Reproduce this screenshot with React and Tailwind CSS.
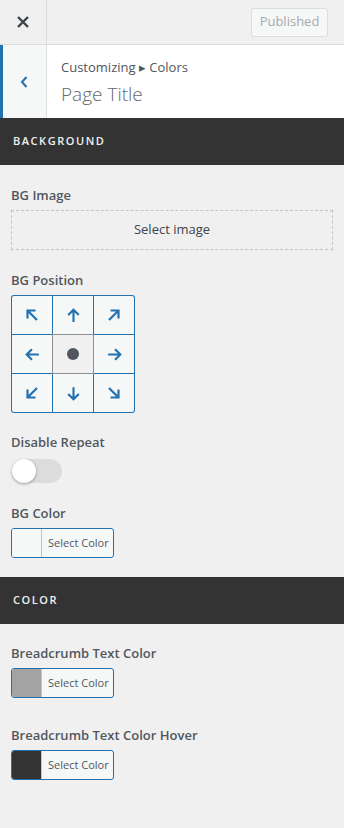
import React from 'react';

const font = { fontFamily: '"Open Sans", "Noto Sans", sans-serif' };

const Arrow = ({ rotate }) => (
    <svg width="17" height="17" viewBox="0 0 16 16" style={{ transform: `rotate(${rotate}deg)` }}>
        <path d="M8 14V3M3 7.5L8 2.5L13 7.5" fill="none" stroke="#2271b1" strokeWidth="2" />
    </svg>
);

const DiagArrow = ({ rotate }) => (
    <svg width="16" height="16" viewBox="0 0 16 16" style={{ transform: `rotate(${rotate}deg)` }}>
        <path d="M13 13L4 4M3.5 11.5V3.5H11.5" fill="none" stroke="#2271b1" strokeWidth="2.2" />
    </svg>
);

const cells = [
    { kind: 'diag', r: 0 },
    { kind: 'arrow', r: 0 },
    { kind: 'diag', r: 90 },
    { kind: 'arrow', r: -90 },
    { kind: 'center' },
    { kind: 'arrow', r: 90 },
    { kind: 'diag', r: -90 },
    { kind: 'arrow', r: 180 },
    { kind: 'diag', r: 180 },
];

const Label = ({ children }) => (
    <div className="text-[13px] font-semibold text-[#50575e] leading-5 mb-[5px]">{children}</div>
);

const ColorButton = ({ swatch }) => (
    <div className="flex w-[103px] h-[30px] border border-[#2271b1] rounded-[3px] overflow-hidden bg-[#f6f7f7]">
        <div className={`w-[30px] border-r border-[#c3c4c7] ${swatch}`}></div>
        <div className="flex-1 flex items-center pl-[6px] text-[11px] text-[#50575e]">Select Color</div>
    </div>
);

const SectionHeader = ({ children }) => (
    <div className="h-[47px] bg-[#333333] flex items-center px-[13px] text-[11px] font-semibold tracking-[0.14em] text-[#f0f0f1]">
        {children}
    </div>
);

export default function App() {
    return (
        <div className="w-[344px] h-[828px] bg-[#f0f0f1] overflow-hidden" style={font}>
            {/* top bar */}
            <div className="flex h-[45px] border-b border-[#dcdcde] bg-[#f0f0f1]">
                <div className="w-[47px] border-r border-[#dcdcde] flex items-center justify-center">
                    <svg width="16" height="16" viewBox="0 0 16 16">
                        <path d="M3 3L13 13M13 3L3 13" stroke="#3c434a" strokeWidth="2.4" />
                    </svg>
                </div>
                <div className="flex-1 flex items-center justify-end pr-[16px]">
                    <div className="w-[77px] h-[29px] border border-[#dcdcde] rounded-[3px] bg-[#f6f7f7] flex items-center justify-center text-[13px] text-[#a7aaad]">
                        Published
                    </div>
                </div>
            </div>

            {/* title */}
            <div className="flex h-[73px] bg-white">
                <div className="w-[47px] bg-[#f6f7f7] border-l-[3px] border-[#2271b1] border-r border-r-[#dcdcde] flex items-center justify-center pr-[2px]">
                    <svg width="10" height="14" viewBox="0 0 10 14">
                        <path d="M7.5 2L3 7L7.5 12" fill="none" stroke="#2271b1" strokeWidth="2" />
                    </svg>
                </div>
                <div className="flex-1 pl-[14px] pt-[13px]">
                    <div className="text-[13px] text-[#50575e] leading-[19px]">Customizing &#9656; Colors</div>
                    <div className="text-[19px] text-[#646970] leading-[28px] font-light mt-[3px]">Page Title</div>
                </div>
            </div>

            <SectionHeader>BACKGROUND</SectionHeader>

            <div className="px-[11px] pt-[20px] pb-[19px]">
                <Label>BG Image</Label>
                <div className="h-[40px] border border-dashed border-[#c3c4c7] flex items-center justify-center text-[13px] text-[#3c434a] mb-[20px]">
                    Select image
                </div>

                <Label>BG Position</Label>
                <div className="grid grid-cols-3 gap-px p-px w-[124px] bg-[#2271b1] rounded-[3px] mb-[19px]">
                    {cells.map((c, i) => (
                        <div
                            key={i}
                            className={`relative h-[38px] flex items-center justify-center ${
                                c.kind === 'center' ? 'bg-[#f0f0f1]' : 'bg-[#f6f7f7]'
                            } ${i === 0 ? 'rounded-tl-[2px]' : ''} ${i === 2 ? 'rounded-tr-[2px]' : ''} ${i === 6 ? 'rounded-bl-[2px]' : ''} ${i === 8 ? 'rounded-br-[2px]' : ''}`}
                        >
                            {c.kind === 'center' && (
                                <>
                                    <div className="absolute -inset-px border border-[#8c8f94]"></div>
                                    <div className="w-[12px] h-[12px] rounded-full bg-[#50575e]"></div>
                                </>
                            )}
                            {c.kind === 'arrow' && <Arrow rotate={c.r} />}
                            {c.kind === 'diag' && <DiagArrow rotate={c.r} />}
                        </div>
                    ))}
                </div>

                <Label>Disable Repeat</Label>
                <div className="relative w-[50px] h-[24px] rounded-full bg-[#dcdcde] ml-[1px] mt-[7px] mb-[20px]">
                    <div className="absolute left-0 top-0 w-[24px] h-[24px] rounded-full bg-white shadow-[0_1px_3px_rgba(0,0,0,0.35)]"></div>
                </div>

                <Label>BG Color</Label>
                <ColorButton swatch="bg-[#f6f7f7]" />
            </div>

            <SectionHeader>COLOR</SectionHeader>

            <div className="px-[11px] pt-[19px]">
                <Label>Breadcrumb Text Color</Label>
                <ColorButton swatch="bg-[#a3a3a3]" />
                <div className="h-[27px]"></div>
                <Label>Breadcrumb Text Color Hover</Label>
                <ColorButton swatch="bg-[#333333]" />
            </div>
        </div>
    );
}
